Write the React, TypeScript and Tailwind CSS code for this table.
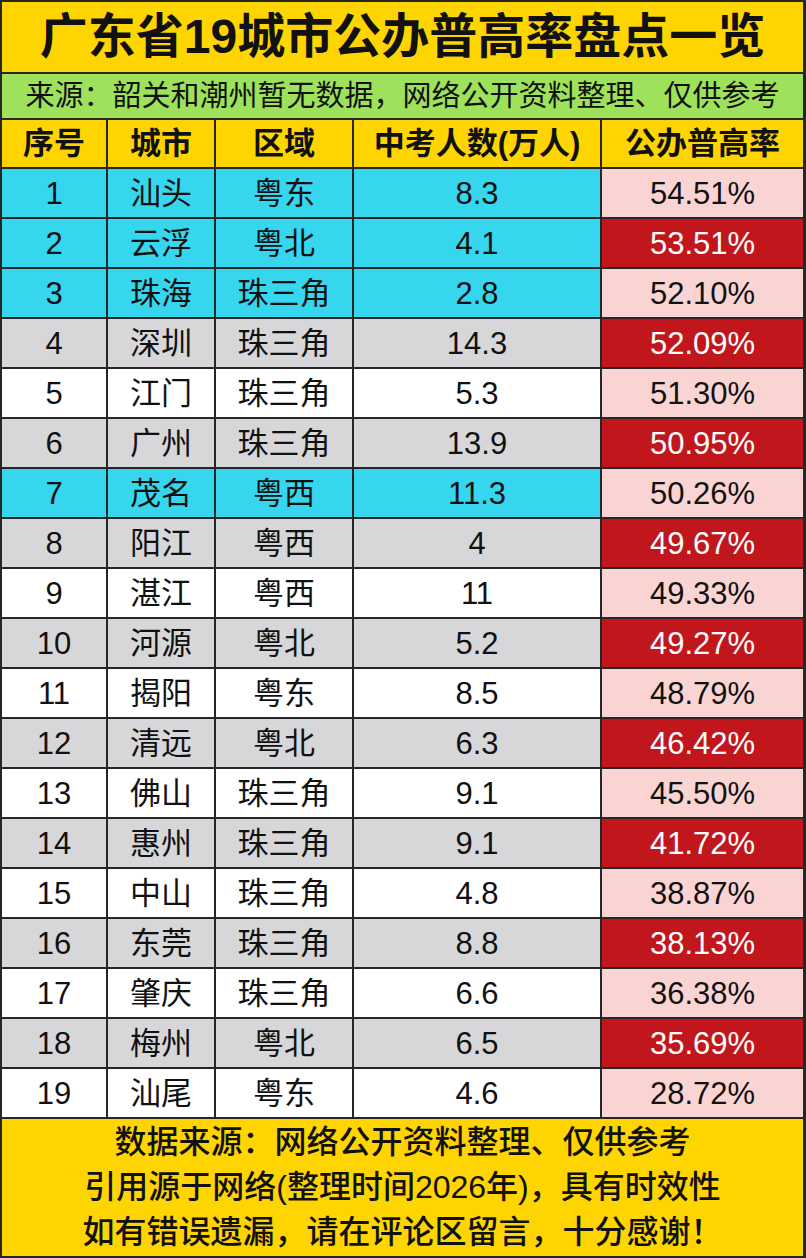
import React from 'react'

const rows = [
  { no: 1, city: '汕头', area: '粤东', count: '8.3', rate: '54.51%' },
  { no: 2, city: '云浮', area: '粤北', count: '4.1', rate: '53.51%' },
  { no: 3, city: '珠海', area: '珠三角', count: '2.8', rate: '52.10%' },
  { no: 4, city: '深圳', area: '珠三角', count: '14.3', rate: '52.09%' },
  { no: 5, city: '江门', area: '珠三角', count: '5.3', rate: '51.30%' },
  { no: 6, city: '广州', area: '珠三角', count: '13.9', rate: '50.95%' },
  { no: 7, city: '茂名', area: '粤西', count: '11.3', rate: '50.26%' },
  { no: 8, city: '阳江', area: '粤西', count: '4', rate: '49.67%' },
  { no: 9, city: '湛江', area: '粤西', count: '11', rate: '49.33%' },
  { no: 10, city: '河源', area: '粤北', count: '5.2', rate: '49.27%' },
  { no: 11, city: '揭阳', area: '粤东', count: '8.5', rate: '48.79%' },
  { no: 12, city: '清远', area: '粤北', count: '6.3', rate: '46.42%' },
  { no: 13, city: '佛山', area: '珠三角', count: '9.1', rate: '45.50%' },
  { no: 14, city: '惠州', area: '珠三角', count: '9.1', rate: '41.72%' },
  { no: 15, city: '中山', area: '珠三角', count: '4.8', rate: '38.87%' },
  { no: 16, city: '东莞', area: '珠三角', count: '8.8', rate: '38.13%' },
  { no: 17, city: '肇庆', area: '珠三角', count: '6.6', rate: '36.38%' },
  { no: 18, city: '梅州', area: '粤北', count: '6.5', rate: '35.69%' },
  { no: 19, city: '汕尾', area: '粤东', count: '4.6', rate: '28.72%' },
]

// rows highlighted in cyan
const cyanRows = [1, 2, 3, 7]

const headers = ['序号', '城市', '区域', '中考人数(万人)', '公办普高率']

export default function App() {
  return (
    <div
      className="w-[806px] h-[1258px] bg-white text-[#111]"
      style={{ fontFamily: "'Liberation Sans', 'Noto Sans CJK SC', sans-serif" }}
    >
      <div className="grid grid-cols-[104px_106px_136px_246px_1fr] gap-[2px] bg-[#262626] border-2 border-r-[3px] border-[#262626]">
        {/* Title */}
        <div className="col-span-5 h-[70px] bg-[#fed500] flex items-center justify-center text-[48px] font-bold leading-none">
          广东省19城市公办普高率盘点一览
        </div>

        {/* Source note */}
        <div className="col-span-5 h-[44px] bg-[#9de25a] flex items-center justify-center text-[29px] leading-none">
          来源：韶关和潮州暂无数据，网络公开资料整理、仅供参考
        </div>

        {/* Header */}
        {headers.map((h) => (
          <div
            key={h}
            className="h-[47px] bg-[#fed500] flex items-center justify-center text-[31px] font-bold leading-none"
          >
            {h}
          </div>
        ))}

        {/* Data rows */}
        {rows.map((r) => {
          const bg = cyanRows.includes(r.no)
            ? 'bg-[#36d6ef]'
            : r.no % 2 === 0
              ? 'bg-[#d7d7d9]'
              : 'bg-white'
          const rateCls =
            r.no % 2 === 0 ? 'bg-[#c1171c] text-white' : 'bg-[#fad4d3]'
          const cell = 'h-[48px] flex items-center justify-center text-[31px] leading-none'
          return (
            <React.Fragment key={r.no}>
              <div className={`${cell} ${bg}`}>{r.no}</div>
              <div className={`${cell} ${bg}`}>{r.city}</div>
              <div className={`${cell} ${bg}`}>{r.area}</div>
              <div className={`${cell} ${bg}`}>{r.count}</div>
              <div className={`${cell} ${rateCls}`}>{r.rate}</div>
            </React.Fragment>
          )
        })}

        {/* Footer */}
        <div className="col-span-5 h-[137px] bg-[#fed500] flex flex-col items-center justify-center text-[32px] font-medium leading-[45px]">
          <div>数据来源：网络公开资料整理、仅供参考</div>
          <div>引用源于网络(整理时间2026年)，具有时效性</div>
          <div>如有错误遗漏，请在评论区留言，十分感谢！</div>
        </div>
      </div>
    </div>
  )
}
